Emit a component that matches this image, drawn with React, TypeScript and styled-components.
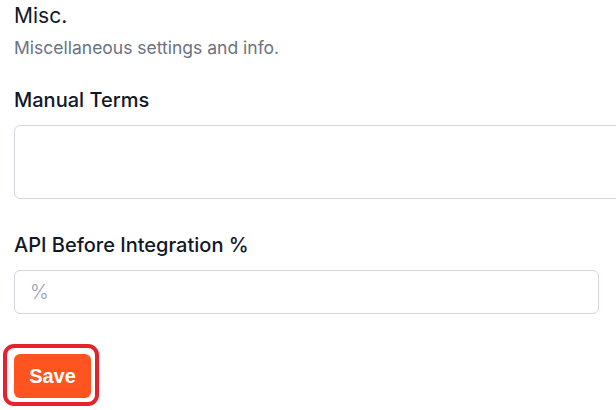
import React from 'react';
import styled, { createGlobalStyle } from 'styled-components';

const GlobalStyle = createGlobalStyle`
  html, body {
    margin: 0;
    padding: 0;
    background: #ffffff;
    overflow: hidden;
  }
  body {
    font-family: Inter, 'Noto Sans', sans-serif;
    color: #111827;
  }
`;

const Page = styled.div`
  width: 616px;
  height: 410px;
  padding: 2px 0 0 14px;
  box-sizing: border-box;
  display: flex;
  flex-direction: column;
`;

const Header = styled.div`
  display: flex;
  flex-direction: column;
  gap: 6px;
  margin-bottom: 26px;
`;

const Title = styled.h2`
  margin: 0;
  font-size: 21px;
  line-height: 28px;
  font-weight: 400;
  color: #111827;
`;

const Subtitle = styled.p`
  margin: 0;
  font-size: 17.5px;
  line-height: 24px;
  color: #6b7280;
`;

const Field = styled.div<{ $spaceAfter: number }>`
  display: flex;
  flex-direction: column;
  gap: 11px;
  margin-bottom: ${p => p.$spaceAfter}px;
`;

const Label = styled.label`
  font-size: 20px;
  line-height: 28px;
  font-weight: 500;
  color: #111827;
`;

const TextArea = styled.textarea`
  display: block;
  width: 620px;
  height: 74px;
  box-sizing: border-box;
  border: 1px solid #d4d6dd;
  border-radius: 6px;
  padding: 10px 15px;
  font-family: inherit;
  font-size: 20px;
  resize: none;
  outline: none;
`;

const Input = styled.input`
  display: block;
  width: 585px;
  height: 44px;
  box-sizing: border-box;
  border: 1px solid #d4d6dd;
  border-radius: 6px;
  padding: 0 15px;
  font-family: inherit;
  font-size: 20px;
  outline: none;
  &::placeholder {
    color: #94a3b8;
    font-weight: 300;
  }
`;

const Highlight = styled.div`
  align-self: flex-start;
  margin: 0 0 0 -11px;
  padding: 6px 4px 4px 7px;
  border: 4px solid #e8202a;
  border-radius: 11px;
  display: flex;
`;

const SaveButton = styled.button`
  width: 77px;
  height: 44px;
  border: none;
  border-radius: 6px;
  background: #ff541f;
  color: #ffffff;
  font-family: 'Liberation Sans', Arial, sans-serif;
  font-weight: 700;
  font-size: 20px;
  padding: 0;
  cursor: pointer;
`;

export default function App() {
  return (
    <>
      <GlobalStyle />
      <Page>
        <Header>
          <Title>Misc.</Title>
          <Subtitle>Miscellaneous settings and info.</Subtitle>
        </Header>
        <Field $spaceAfter={32}>
          <Label>Manual Terms</Label>
          <TextArea />
        </Field>
        <Field $spaceAfter={30}>
          <Label>API Before Integration %</Label>
          <Input placeholder="%" />
        </Field>
        <Highlight>
          <SaveButton>Save</SaveButton>
        </Highlight>
      </Page>
    </>
  );
}
